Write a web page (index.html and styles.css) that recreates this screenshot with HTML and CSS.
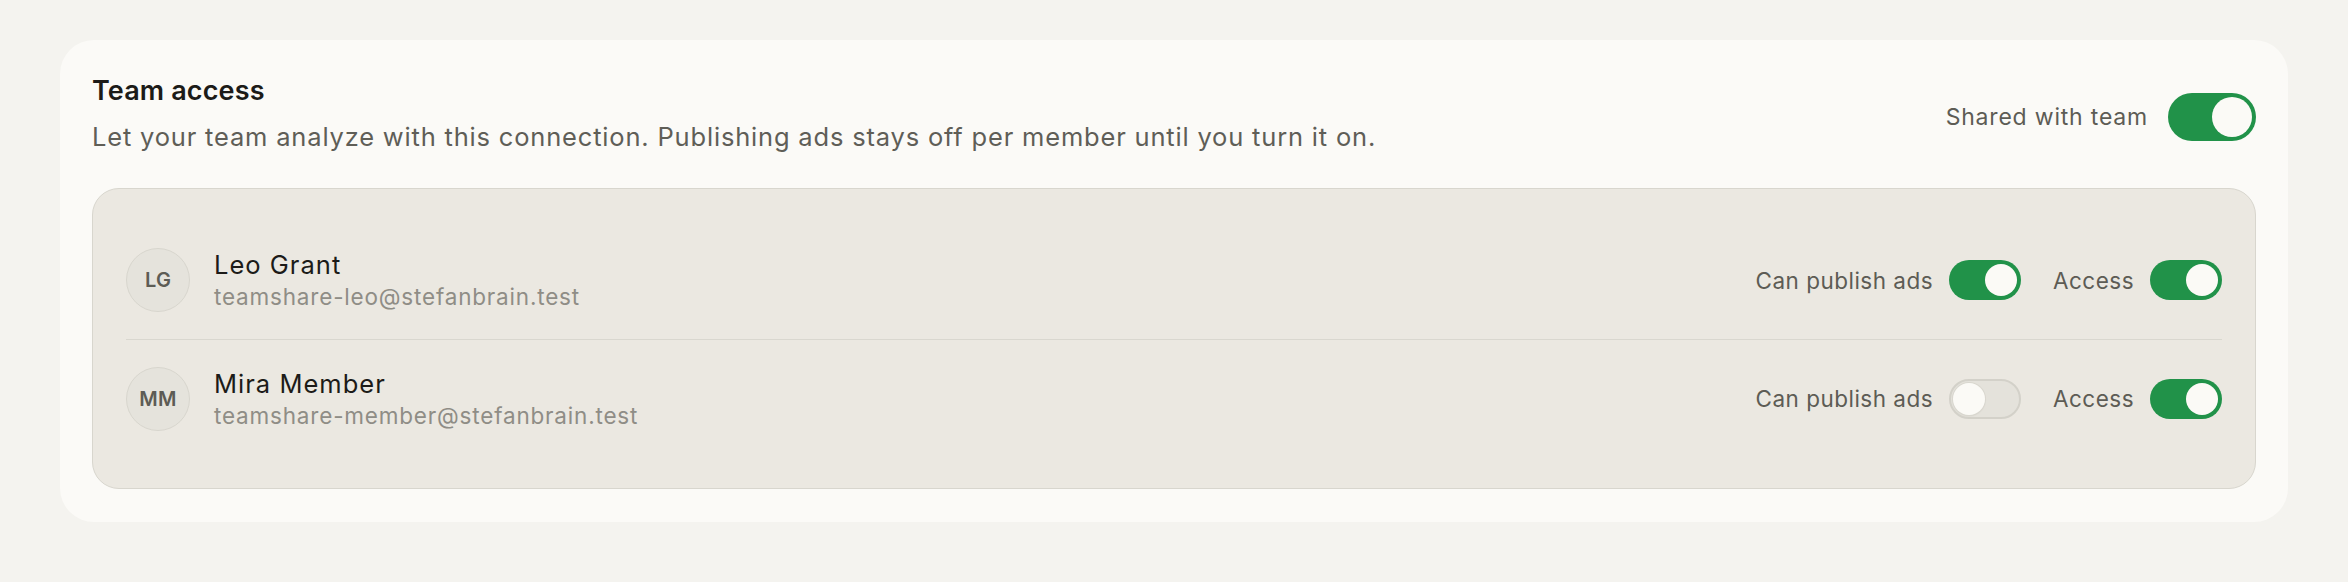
FILE: index.html
```html
<!DOCTYPE html>
<html lang="en">
<head>
<meta charset="utf-8">
<title>Team access</title>
<link rel="stylesheet" href="styles.css">
</head>
<body>
<main class="page">
  <section class="card">
    <header class="card-head">
      <div class="head-text">
        <h2 class="title">Team access</h2>
        <p class="subtitle">Let your team analyze with this connection. Publishing ads stays off per member until you turn it on.</p>
      </div>
      <label class="head-toggle">
        <span class="head-label">Shared with team</span>
        <span class="switch switch-lg is-on"><span class="knob"></span></span>
      </label>
    </header>
    <div class="members">
      <div class="member">
        <div class="avatar">LG</div>
        <div class="who">
          <div class="name">Leo Grant</div>
          <div class="email">teamshare-leo@stefanbrain.test</div>
        </div>
        <div class="controls">
          <span class="ctl-label">Can publish ads</span>
          <span class="switch is-on"><span class="knob"></span></span>
          <span class="ctl-label ctl-gap">Access</span>
          <span class="switch is-on"><span class="knob"></span></span>
        </div>
      </div>
      <div class="member">
        <div class="avatar">MM</div>
        <div class="who">
          <div class="name">Mira Member</div>
          <div class="email">teamshare-member@stefanbrain.test</div>
        </div>
        <div class="controls">
          <span class="ctl-label">Can publish ads</span>
          <span class="switch is-off"><span class="knob"></span></span>
          <span class="ctl-label ctl-gap">Access</span>
          <span class="switch is-on"><span class="knob"></span></span>
        </div>
      </div>
    </div>
  </section>
</main>
</body>
</html>
```
FILE: styles.css
```css
* { box-sizing: border-box; }
html, body { margin: 0; padding: 0; }
body {
  background: #f4f3ef;
  font-family: Inter, "Noto Sans", "Liberation Sans", sans-serif;
  color: #1c1b18;
  letter-spacing: 0.03em;
}
.page {
  padding: 40px 60px 60px;
}
.card {
  background: #fbfaf7;
  border-radius: 34px;
  padding: 33px 32px 33px;
}
.card-head {
  display: flex;
  align-items: center;
  justify-content: space-between;
}
.title {
  margin: 0;
  font-size: 27px;
  line-height: 35px;
  font-weight: 600;
  color: #1c1b18;
  letter-spacing: 0.005em;
}
.subtitle {
  margin: 10px 0 0;
  font-size: 25.5px;
  line-height: 38px;
  color: #5f5e57;
  letter-spacing: 0.032em;
}
.head-toggle {
  display: flex;
  align-items: center;
  gap: 20px;
  margin-top: 4px;
}
.head-label {
  font-size: 23px;
  color: #5d5c55;
  letter-spacing: 0.035em;
}
.switch {
  position: relative;
  display: inline-block;
  width: 72px;
  height: 40px;
  border-radius: 20px;
  flex: none;
}
.switch .knob {
  position: absolute;
  top: 4px;
  width: 32px;
  height: 32px;
  border-radius: 50%;
  background: #fbfaf6;
}
.switch.is-on { background: #219249; }
.switch.is-on .knob { right: 4px; }
.switch.is-off {
  background: #e4e2db;
  border: 2px solid #d3d1c9;
}
.switch.is-off .knob {
  top: 2px;
  left: 2px;
  box-shadow: 0 0 0 1px #d9d7cf, 0 1px 2px rgba(0,0,0,0.08);
}
.switch-lg {
  width: 88px;
  height: 48px;
  border-radius: 24px;
}
.switch-lg .knob {
  width: 40px;
  height: 40px;
}
.members {
  margin-top: 32px;
  background: #ebe8e1;
  border: 1px solid #d8d6ce;
  border-radius: 27px;
  padding: 32px 33px 31px;
}
.member {
  display: flex;
  align-items: center;
  height: 118px;
}
.member + .member {
  border-top: 1px solid #d9d7cf;
}
.avatar {
  width: 64px;
  height: 64px;
  border-radius: 50%;
  background: #e5e3dc;
  border: 1.5px solid #d8d6ce;
  display: flex;
  align-items: center;
  justify-content: center;
  font-size: 20px;
  font-weight: 600;
  color: #5d5c55;
  letter-spacing: 0.01em;
  flex: none;
}
.who {
  margin-left: 24px;
  flex: 1;
}
.name {
  font-size: 25.5px;
  line-height: 33px;
  color: #1c1b18;
  letter-spacing: 0.04em;
}
.email {
  margin-top: 1px;
  font-size: 22.5px;
  line-height: 30px;
  color: #8f8d86;
  letter-spacing: 0.036em;
}
.controls {
  display: flex;
  align-items: center;
  gap: 16px;
}
.ctl-label {
  font-size: 22.5px;
  color: #5d5c55;
}
.ctl-gap {
  margin-left: 16px;
}
```
